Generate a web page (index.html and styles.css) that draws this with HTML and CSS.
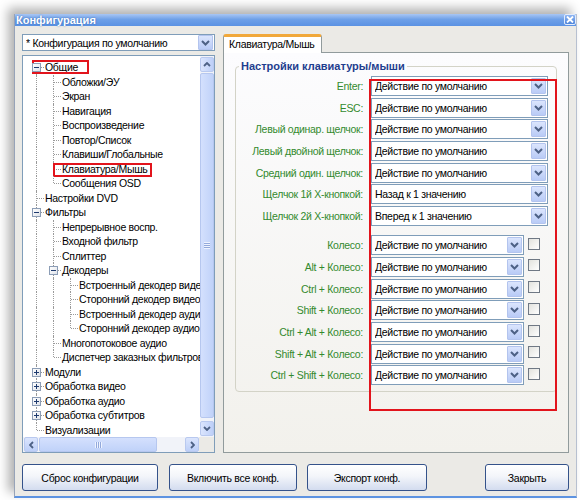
FILE: index.html
```html
<!DOCTYPE html>
<html>
<head>
<meta charset="utf-8">
<title>Конфигурация</title>
<link rel="stylesheet" href="styles.css">
</head>
<body>
<div class="window">
  <div class="titlebar">
    <span class="title">Конфигурация</span>
    <span class="close"><svg width="8" height="7" viewBox="0 0 8 7"><path d="M1 0.5 L7 6.5 M7 0.5 L1 6.5" stroke="#fff" stroke-width="1.8"/></svg></span>
  </div>
  <div class="content">
    <div class="main">
      <div class="left">
        <div class="combo top">
          <span class="val">* Конфигурация по умолчанию</span>
          <span class="dd"><svg width="9" height="6" viewBox="0 0 9 6"><path d="M1 1 L4.5 4.5 L8 1" fill="none" stroke="#4d6185" stroke-width="2"/></svg></span>
        </div>
        <div class="tree">
          <div class="tree-body">
            <div class="rows">
              <div class="row"><span class="c f"><span class="bx minus"></span></span><span class="txt">Общие</span><span class="anno a1"></span></div>
              <div class="row"><span class="c v"></span><span class="c t"></span><span class="txt">Обложки/ЭУ</span></div>
              <div class="row"><span class="c v"></span><span class="c t"></span><span class="txt">Экран</span></div>
              <div class="row"><span class="c v"></span><span class="c t"></span><span class="txt">Навигация</span></div>
              <div class="row"><span class="c v"></span><span class="c t"></span><span class="txt">Воспроизведение</span></div>
              <div class="row"><span class="c v"></span><span class="c t"></span><span class="txt">Повтор/Список</span></div>
              <div class="row"><span class="c v"></span><span class="c t"></span><span class="txt">Клавиши/Глобальные</span></div>
              <div class="row"><span class="c v"></span><span class="c t"></span><span class="txt">Клавиатура/Мышь</span><span class="anno a2"></span></div>
              <div class="row"><span class="c v"></span><span class="c l"></span><span class="txt">Сообщения OSD</span></div>
              <div class="row"><span class="c t"></span><span class="txt">Настройки DVD</span></div>
              <div class="row"><span class="c t"><span class="bx minus"></span></span><span class="txt">Фильтры</span></div>
              <div class="row"><span class="c v"></span><span class="c t"></span><span class="txt">Непрерывное воспр.</span></div>
              <div class="row"><span class="c v"></span><span class="c t"></span><span class="txt">Входной фильтр</span></div>
              <div class="row"><span class="c v"></span><span class="c t"></span><span class="txt">Сплиттер</span></div>
              <div class="row"><span class="c v"></span><span class="c t"><span class="bx minus"></span></span><span class="txt">Декодеры</span></div>
              <div class="row"><span class="c v"></span><span class="c v"></span><span class="c t"></span><span class="txt">Встроенный декодер видео</span></div>
              <div class="row"><span class="c v"></span><span class="c v"></span><span class="c t"></span><span class="txt">Сторонний декодер видео</span></div>
              <div class="row"><span class="c v"></span><span class="c v"></span><span class="c t"></span><span class="txt">Встроенный декодер аудио</span></div>
              <div class="row"><span class="c v"></span><span class="c v"></span><span class="c l"></span><span class="txt">Сторонний декодер аудио</span></div>
              <div class="row"><span class="c v"></span><span class="c t"></span><span class="txt">Многопотоковое аудио</span></div>
              <div class="row"><span class="c v"></span><span class="c l"></span><span class="txt">Диспетчер заказных фильтров</span></div>
              <div class="row"><span class="c t"><span class="bx plus"></span></span><span class="txt">Модули</span></div>
              <div class="row"><span class="c t"><span class="bx plus"></span></span><span class="txt">Обработка видео</span></div>
              <div class="row"><span class="c t"><span class="bx plus"></span></span><span class="txt">Обработка аудио</span></div>
              <div class="row"><span class="c t"><span class="bx plus"></span></span><span class="txt">Обработка субтитров</span></div>
              <div class="row"><span class="c l"></span><span class="txt">Визуализации</span></div>
            </div>
            <div class="vscroll">
              <span class="sbtn"><svg width="8" height="5" viewBox="0 0 8 5"><path d="M1 4 L4 1 L7 4" fill="none" stroke="#4d6185" stroke-width="1.8"/></svg></span>
              <span class="vthumb"><span class="vgrip"></span></span>
              <span class="sbtn"><svg width="8" height="5" viewBox="0 0 8 5"><path d="M1 1 L4 4 L7 1" fill="none" stroke="#4d6185" stroke-width="1.8"/></svg></span>
            </div>
          </div>
          <div class="hscroll">
            <span class="sbtn h"><svg width="5" height="8" viewBox="0 0 5 8"><path d="M4 1 L1 4 L4 7" fill="none" stroke="#4d6185" stroke-width="1.8"/></svg></span>
            <span class="hthumb"><span class="hgrip"></span></span>
            <span class="htrack"></span>
            <span class="sbtn h"><svg width="5" height="8" viewBox="0 0 5 8"><path d="M1 1 L4 4 L1 7" fill="none" stroke="#4d6185" stroke-width="1.8"/></svg></span>
            <span class="corner"></span>
          </div>
        </div>
      </div>
      <div class="right">
        <div class="tabs"><div class="tab">Клавиатура/Мышь</div></div>
        <div class="panel">
          <fieldset class="group">
            <legend>Настройки клавиатуры/мыши</legend>
            <div class="grid">
              <div class="lbl">Enter:</div><div class="cell"><div class="combo"><span class="val">Действие по умолчанию</span><span class="dd"><svg width="9" height="6" viewBox="0 0 9 6"><path d="M1 1 L4.5 4.5 L8 1" fill="none" stroke="#4d6185" stroke-width="2"/></svg></span></div></div>
              <div class="lbl">ESC:</div><div class="cell"><div class="combo"><span class="val">Действие по умолчанию</span><span class="dd"><svg width="9" height="6" viewBox="0 0 9 6"><path d="M1 1 L4.5 4.5 L8 1" fill="none" stroke="#4d6185" stroke-width="2"/></svg></span></div></div>
              <div class="lbl">Левый одинар. щелчок:</div><div class="cell"><div class="combo"><span class="val">Действие по умолчанию</span><span class="dd"><svg width="9" height="6" viewBox="0 0 9 6"><path d="M1 1 L4.5 4.5 L8 1" fill="none" stroke="#4d6185" stroke-width="2"/></svg></span></div></div>
              <div class="lbl">Левый двойной щелчок:</div><div class="cell"><div class="combo"><span class="val">Действие по умолчанию</span><span class="dd"><svg width="9" height="6" viewBox="0 0 9 6"><path d="M1 1 L4.5 4.5 L8 1" fill="none" stroke="#4d6185" stroke-width="2"/></svg></span></div></div>
              <div class="lbl">Средний один. щелчок:</div><div class="cell"><div class="combo"><span class="val">Действие по умолчанию</span><span class="dd"><svg width="9" height="6" viewBox="0 0 9 6"><path d="M1 1 L4.5 4.5 L8 1" fill="none" stroke="#4d6185" stroke-width="2"/></svg></span></div></div>
              <div class="lbl">Щелчок 1й X-кнопкой:</div><div class="cell"><div class="combo"><span class="val">Назад к 1 значению</span><span class="dd"><svg width="9" height="6" viewBox="0 0 9 6"><path d="M1 1 L4.5 4.5 L8 1" fill="none" stroke="#4d6185" stroke-width="2"/></svg></span></div></div>
              <div class="lbl">Щелчок 2й X-кнопкой:</div><div class="cell"><div class="combo"><span class="val">Вперед к 1 значению</span><span class="dd"><svg width="9" height="6" viewBox="0 0 9 6"><path d="M1 1 L4.5 4.5 L8 1" fill="none" stroke="#4d6185" stroke-width="2"/></svg></span></div></div>
            </div>
            <div class="grid wheel">
              <div class="lbl">Колесо:</div><div class="cell"><div class="combo short"><span class="val">Действие по умолчанию</span><span class="dd"><svg width="9" height="6" viewBox="0 0 9 6"><path d="M1 1 L4.5 4.5 L8 1" fill="none" stroke="#4d6185" stroke-width="2"/></svg></span></div><span class="chk"></span></div>
              <div class="lbl">Alt + Колесо:</div><div class="cell"><div class="combo short"><span class="val">Действие по умолчанию</span><span class="dd"><svg width="9" height="6" viewBox="0 0 9 6"><path d="M1 1 L4.5 4.5 L8 1" fill="none" stroke="#4d6185" stroke-width="2"/></svg></span></div><span class="chk"></span></div>
              <div class="lbl">Ctrl + Колесо:</div><div class="cell"><div class="combo short"><span class="val">Действие по умолчанию</span><span class="dd"><svg width="9" height="6" viewBox="0 0 9 6"><path d="M1 1 L4.5 4.5 L8 1" fill="none" stroke="#4d6185" stroke-width="2"/></svg></span></div><span class="chk"></span></div>
              <div class="lbl">Shift + Колесо:</div><div class="cell"><div class="combo short"><span class="val">Действие по умолчанию</span><span class="dd"><svg width="9" height="6" viewBox="0 0 9 6"><path d="M1 1 L4.5 4.5 L8 1" fill="none" stroke="#4d6185" stroke-width="2"/></svg></span></div><span class="chk"></span></div>
              <div class="lbl">Ctrl + Alt + Колесо:</div><div class="cell"><div class="combo short"><span class="val">Действие по умолчанию</span><span class="dd"><svg width="9" height="6" viewBox="0 0 9 6"><path d="M1 1 L4.5 4.5 L8 1" fill="none" stroke="#4d6185" stroke-width="2"/></svg></span></div><span class="chk"></span></div>
              <div class="lbl">Shift + Alt + Колесо:</div><div class="cell"><div class="combo short"><span class="val">Действие по умолчанию</span><span class="dd"><svg width="9" height="6" viewBox="0 0 9 6"><path d="M1 1 L4.5 4.5 L8 1" fill="none" stroke="#4d6185" stroke-width="2"/></svg></span></div><span class="chk"></span></div>
              <div class="lbl">Ctrl + Shift + Колесо:</div><div class="cell"><div class="combo short"><span class="val">Действие по умолчанию</span><span class="dd"><svg width="9" height="6" viewBox="0 0 9 6"><path d="M1 1 L4.5 4.5 L8 1" fill="none" stroke="#4d6185" stroke-width="2"/></svg></span></div><span class="chk"></span></div>
            </div>
          </fieldset>
          <div class="anno big"></div>
        </div>
      </div>
    </div>
    <div class="buttons">
      <div class="btn b1">Сброс конфигурации</div>
      <div class="btn b2">Включить все конф.</div>
      <div class="btn b3">Экспорт конф.</div>
      <div class="btn b4">Закрыть</div>
    </div>
  </div>
</div>
</body>
</html>
```
FILE: styles.css
```css
* { box-sizing: border-box; }
html, body { margin: 0; padding: 0; background: #fff; }
body {
  font-family: "Liberation Sans", Arial, sans-serif;
  font-size: 10.5px;
  letter-spacing: -0.3px;
  color: #000;
  padding: 14px 3px 0 14px;
  width: 580px;
  height: 500px;
  overflow: hidden;
}
.window {
  width: 563px;
  height: 484px;
  background: #ebeae6;
  border-left: 1px solid #97a3b8;
  border-right: 1px solid #b7c0d0;
  border-bottom: 2px solid #5d93e1;
  box-shadow: -6px -6px 10px rgba(0,0,0,0.3);
  display: flex;
  flex-direction: column;
}
.titlebar {
  height: 12px;
  background: linear-gradient(#a9c6f3, #6ea0e8 45%, #5b92e3);
  display: flex;
  align-items: center;
  color: #fff;
  font-weight: bold;
  font-size: 11px;
  letter-spacing: 0;
  padding-left: 1px;
}
.title { text-shadow: 0 0 2px #3565b0; line-height: 12px; }
.close {
  margin-left: auto;
  width: 12px;
  height: 11px;
  margin-top: -1px;
  background: linear-gradient(#8fb6f2, #4f86dc);
  border: 1px solid #e2ebfb;
  border-radius: 2px;
  display: flex;
  align-items: center;
  justify-content: center;
}
.content {
  flex: 1;
  padding: 8px 7px 0 7px;
  display: flex;
  flex-direction: column;
}
.main { display: flex; gap: 8px; height: 419px; }
.left { width: 193px; display: flex; flex-direction: column; gap: 4px; }
.right { flex: 1; display: flex; flex-direction: column; }

/* combo boxes */
.combo {
  height: 20px;
  width: 100%;
  border: 1px solid #7f9db9;
  background: #fff;
  display: flex;
  align-items: center;
  padding-left: 3px;
}
.combo.top { height: 19px; }
.combo .val { flex: 1; white-space: nowrap; overflow: hidden; }
.dd {
  width: 15px;
  height: 16px;
  margin-right: 1px;
  background: linear-gradient(#dbe5fd, #b9cbf6);
  border: 1px solid #b3c4ee;
  border-radius: 1px;
  display: flex;
  align-items: center;
  justify-content: center;
  flex: none;
}
.combo.top .dd { height: 15px; }
.combo.short { width: 153px; flex: none; }
.chk {
  width: 12px;
  height: 12px;
  border: 1px solid #6f7884;
  background: linear-gradient(135deg, #e2e2dd, #fff);
  margin-left: 4px;
  margin-bottom: 3px;
  flex: none;
}

/* tree */
.tree {
  flex: 1;
  border: 1px solid #7f9db9;
  background: #fff;
  display: flex;
  flex-direction: column;
}
.tree-body { flex: 1; display: flex; min-height: 0; }
.rows { flex: 1; overflow: hidden; padding: 4px 0 0 5px; }
.row {
  height: 14.5px;
  display: flex;
  align-items: stretch;
  position: relative;
  white-space: nowrap;
}
.txt { line-height: 14.5px; }
.c { width: 17px; flex: none; position: relative; }
.c::before, .c::after { content: ""; position: absolute; }
.v::before, .t::before { left: 8px; top: 0; bottom: 0; border-left: 1px dotted #9a9a9a; }
.l::before { left: 8px; top: 0; height: 7px; border-left: 1px dotted #9a9a9a; }
.f::before { left: 8px; top: 7px; bottom: 0; border-left: 1px dotted #9a9a9a; }
.t::after, .l::after, .f::after { left: 9px; right: 1px; top: 7px; border-top: 1px dotted #9a9a9a; }
.bx {
  position: absolute;
  z-index: 1;
  left: 4px;
  top: 3px;
  width: 9px;
  height: 9px;
  border: 1px solid #8c9db6;
}
.bx.minus {
  background: linear-gradient(#1e3a6e, #1e3a6e) center / 5px 1px no-repeat, linear-gradient(135deg, #fff, #dfe3ea);
}
.bx.plus {
  background: linear-gradient(#1e3a6e, #1e3a6e) center / 5px 1px no-repeat, linear-gradient(#1e3a6e, #1e3a6e) center / 1px 5px no-repeat, linear-gradient(135deg, #fff, #dfe3ea);
}
.anno { position: absolute; border: 2px solid #e2141c; }
.a1 { left: 4px; top: 0; width: 57px; height: 14px; }
.a2 { left: 25px; top: 1px; width: 99px; height: 14px; }

/* scrollbars */
.vscroll {
  width: 14px;
  flex: none;
  background: #f1f3f9;
  display: flex;
  flex-direction: column;
  padding: 1px 0;
}
.sbtn {
  width: 14px;
  height: 15px;
  flex: none;
  background: linear-gradient(90deg, #dbe5fd, #bdcff8);
  border: 1px solid #b9c9ef;
  border-radius: 2px;
  display: flex;
  align-items: center;
  justify-content: center;
}
.vthumb {
  flex: 1;
  margin: 1px 0 3px;
  background: linear-gradient(90deg, #d4e0fd, #c0d2f9);
  border: 1px solid #b6c7ef;
  border-radius: 2px;
  display: flex;
  align-items: center;
  justify-content: center;
}
.vgrip {
  width: 6px;
  height: 7px;
  background: repeating-linear-gradient(#eef3ff 0 1px, #93a9db 1px 2px);
}
.hscroll {
  height: 15px;
  flex: none;
  display: flex;
  background: #f1f3f9;
  padding-left: 1px;
}
.sbtn.h { width: 14px; height: 15px; background: linear-gradient(#dbe5fd, #bdcff8); }
.hthumb {
  width: 118px;
  margin: 0 1px;
  background: linear-gradient(#d4e0fd, #c0d2f9);
  border: 1px solid #b6c7ef;
  border-radius: 2px;
  display: flex;
  align-items: center;
  justify-content: center;
}
.hgrip {
  width: 7px;
  height: 6px;
  background: repeating-linear-gradient(90deg, #eef3ff 0 1px, #93a9db 1px 2px);
}
.htrack { flex: 1; }
.corner { width: 15px; background: #ebeae6; }

/* tab panel */
.tabs { height: 18px; display: flex; }
.tab {
  width: 99px;
  height: 19px;
  margin-bottom: -1px;
  position: relative;
  z-index: 1;
  background: #fff;
  border: 1px solid #919b9c;
  border-bottom: none;
  border-top: 3px solid #f1a83a;
  border-radius: 3px 3px 0 0;
  padding: 1px 0 0 5px;
  white-space: nowrap;
}
.panel {
  flex: 1;
  border: 1px solid #919b9c;
  background: linear-gradient(#fcfcfe, #f2f1ec);
  position: relative;
  padding: 7px 11px 0 11px;
}
.group {
  margin: 0;
  border: 1px solid #d3d3c7;
  border-radius: 4px;
  padding: 2px 8px 5px 0;
  min-width: 0;
}
.group legend {
  padding: 0 2px;
  margin-left: 3px;
  font-weight: bold;
  font-size: 11px;
  letter-spacing: 0;
  color: #1f3e8e;
  line-height: 13px;
}
.grid { display: grid; grid-template-columns: 1fr 177px; column-gap: 8px; }
.grid.wheel { margin-top: 7.6px; }
.lbl {
  height: 21.7px;
  display: flex;
  align-items: center;
  justify-content: flex-end;
  color: #338a2e;
  white-space: nowrap;
}
.cell { height: 21.7px; display: flex; align-items: center; }
.anno.big { left: 145px; top: 26px; width: 188px; height: 332px; }

/* buttons */
.buttons { display: flex; margin-top: 11px; height: 27px; }
.btn {
  height: 27px;
  border: 1px solid #34528a;
  border-radius: 3px;
  background: linear-gradient(#ffffff, #f3f5fa 45%, #d3dcef);
  display: flex;
  align-items: center;
  justify-content: center;
  white-space: nowrap;
}
.b1 { width: 136px; }
.b2 { width: 128px; margin-left: 11px; }
.b3 { width: 120px; margin-left: 10px; }
.b4 { width: 84px; margin-left: auto; }
```
